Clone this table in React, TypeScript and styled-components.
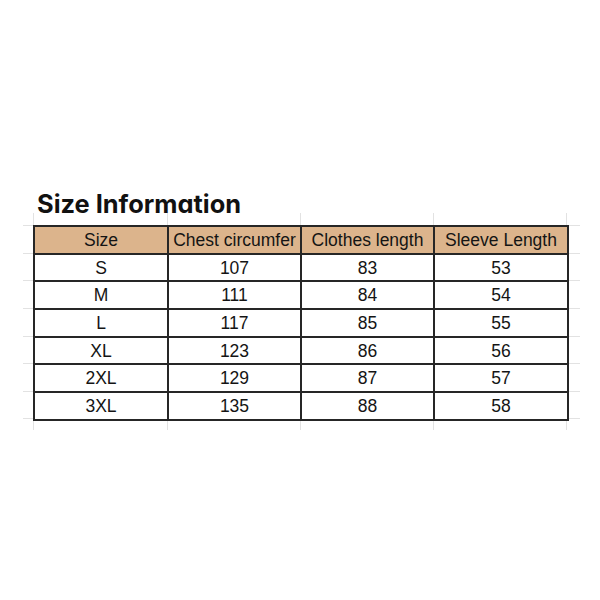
import styled, { createGlobalStyle } from "styled-components";

const GlobalStyle = createGlobalStyle`
  html, body {
    margin: 0;
    padding: 0;
    background: #ffffff;
  }
`;

const columns = [134, 133, 133, 134];
const ROW_HEIGHT = 27.7;

const headers = ["Size", "Chest circumfer", "Clothes length", "Sleeve Length"];
const sizes = [
  ["S", "107", "83", "53"],
  ["M", "111", "84", "54"],
  ["L", "117", "85", "55"],
  ["XL", "123", "86", "56"],
  ["2XL", "129", "87", "57"],
  ["3XL", "135", "88", "58"],
];

const Page = styled.main`
  width: 600px;
  height: 600px;
  padding-top: 193px;
  box-sizing: border-box;
`;

const Title = styled.h2`
  margin: 0 0 -2px 37px;
  font-family: Inter, "Noto Sans", sans-serif;
  font-feature-settings: "cv11" 1;
  font-weight: 700;
  font-size: 25.4px;
  line-height: 22px;
  color: #111111;
`;

const Sheet = styled.div`
  display: grid;
  grid-template-columns: 10px auto 11px;
  grid-template-rows: 12px auto 9px;
  margin-left: 23px;
  width: max-content;
`;

const StripH = styled.div`
  display: flex;
`;

const StripV = styled.div`
  display: flex;
  flex-direction: column;
`;

const GridTick = styled.div<{ $vertical?: boolean; $last?: boolean }>`
  box-sizing: border-box;
  border-color: #e2e2e2;
  border-style: solid;
  border-width: 0;
  ${(p) =>
    p.$vertical
      ? `border-top-width: 1px; ${p.$last ? "border-bottom-width: 1px;" : ""}`
      : `border-left-width: 1px; ${p.$last ? "border-right-width: 1px;" : ""}`}
`;

const Table = styled.table`
  border-collapse: collapse;
  table-layout: fixed;
  font-family: "Liberation Sans", Arial, sans-serif;
  font-size: 17.5px;
  color: #141414;
`;

const Cell = styled.td<{ $head?: boolean }>`
  border: 2px solid #262626;
  height: ${ROW_HEIGHT - 2}px;
  padding: 0;
  line-height: 20px;
  text-align: center;
  vertical-align: middle;
  white-space: nowrap;
  font-weight: 400;
  background: ${(p) => (p.$head ? "#dcb48c" : "#ffffff")};
`;

export default function App() {
  const rowCount = sizes.length + 1;
  return (
    <Page>
      <GlobalStyle />
      <Title>Size Information</Title>
      <Sheet>
        <div />
        <StripH>
          {columns.map((w, i) => (
            <GridTick key={i} style={{ width: w }} $last={i === columns.length - 1} />
          ))}
        </StripH>
        <div />

        <StripV>
          {Array.from({ length: rowCount }).map((_, i) => (
            <GridTick key={i} $vertical style={{ height: ROW_HEIGHT }} $last={i === rowCount - 1} />
          ))}
        </StripV>
        <Table>
          <colgroup>
            {columns.map((w, i) => (
              <col key={i} style={{ width: w }} />
            ))}
          </colgroup>
          <thead>
            <tr>
              {headers.map((h) => (
                <Cell as="th" key={h} $head>
                  {h}
                </Cell>
              ))}
            </tr>
          </thead>
          <tbody>
            {sizes.map((row) => (
              <tr key={row[0]}>
                {row.map((v, i) => (
                  <Cell key={i}>{v}</Cell>
                ))}
              </tr>
            ))}
          </tbody>
        </Table>
        <StripV>
          {Array.from({ length: rowCount }).map((_, i) => (
            <GridTick key={i} $vertical style={{ height: ROW_HEIGHT }} $last={i === rowCount - 1} />
          ))}
        </StripV>

        <div />
        <StripH>
          {columns.map((w, i) => (
            <GridTick key={i} style={{ width: w }} $last={i === columns.length - 1} />
          ))}
        </StripH>
        <div />
      </Sheet>
    </Page>
  );
}
